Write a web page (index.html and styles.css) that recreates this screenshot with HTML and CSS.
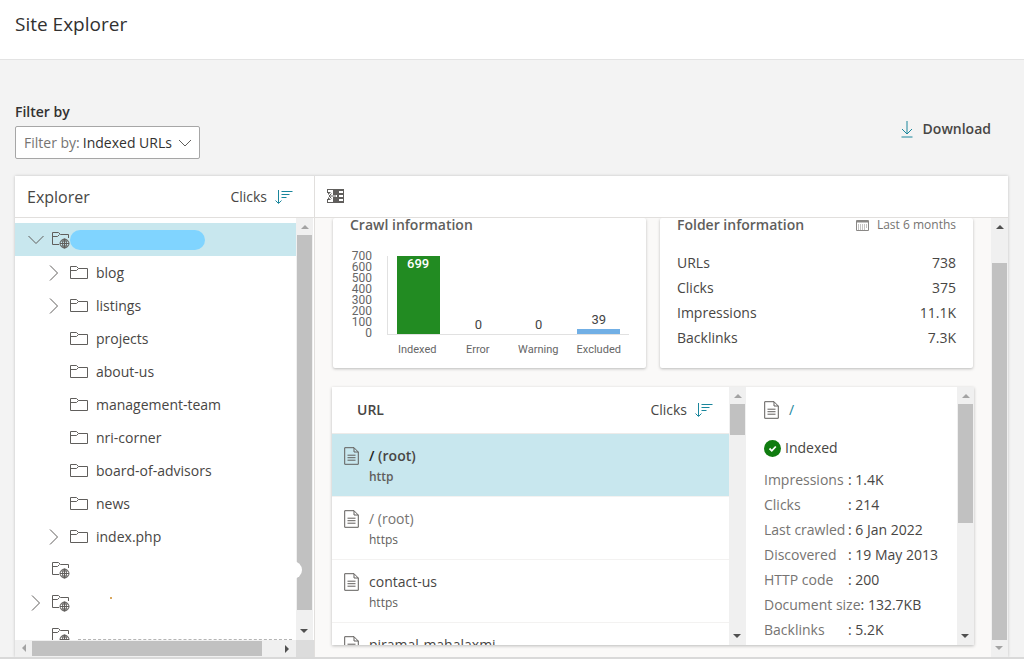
FILE: index.html
```html
<!DOCTYPE html>
<html lang="en">
  <head>
    <meta charset="UTF-8" />
    <meta name="viewport" content="width=device-width, initial-scale=1.0" />
    <title>Site Explorer</title>
    <link rel="stylesheet" href="styles.css" />
  </head>
  <body>
    <!-- Shared icons -->
    <svg class="sprite" aria-hidden="true">
      <symbol id="folder" viewBox="0 0 18 13">
        <path d="M.5 12.500V.5h6l2 2h9v10zM.5 4.500h6l2-2" />
      </symbol>
      <symbol id="site" viewBox="0 0 18 18">
        <path d="M7 13.500H.5V1.500h6l2 2h8V7M.5 5.500h5l2-2" />
        <g>
          <circle cx="12.500" cy="12.500" r="4.500" />
          <ellipse cx="12.500" cy="12.500" rx="2" ry="4.500" />
          <path d="M8 12.500h9M12.500 8v9M9 10h7M9 15h7" />
        </g>
      </symbol>
      <symbol id="chevron" viewBox="0 0 10 16">
        <path d="M1 .5L8.500 8 1 15.500" />
      </symbol>
      <symbol id="sort" viewBox="0 0 18 16">
        <path d="M3.500 1v13M.5 11.500l3 3 3-3M6.500 2.500h11M6.500 5.500h8M6.500 8.500h5" />
      </symbol>
      <symbol id="page" viewBox="0 0 15 18">
        <path d="M.7.7h9.300l4.300 4.300v12.300H.7zM10 .7v4.300h4.300M3.500 8.200h8M3.500 10.700h8M3.500 13.200h8" />
      </symbol>
    </svg>

    <header class="header">
      <h1>Site Explorer</h1>
    </header>

    <main class="main">
      <div class="toolbar">
        <div class="filter">
          <label class="filter__title" for="filter">Filter by</label>
          <div class="filter__box">
            <span>Filter by:</span>
            <select id="filter">
              <option>Indexed URLs</option>
              <option>All URLs</option>
            </select>
            <svg class="filter__arrow" viewBox="0 0 14 8"><path d="M1 1l6 6 6-6" /></svg>
          </div>
        </div>
        <button type="button" class="download">
          <svg viewBox="0 0 12 18"><path d="M6 1v13M1 9l5 5 5-5M.5 17h11" /></svg>
          Download
        </button>
      </div>

      <div class="panel">
        <section class="explorer">
          <div class="bar">
            <h2>Explorer</h2>
            <button type="button" class="sort">Clicks <svg><use href="#sort" /></svg></button>
          </div>
          <div class="explorer__body">
            <ul class="tree">
              <li class="tree__row tree__row--selected">
                <button type="button" class="toggle toggle--open" aria-label="Collapse site"><svg><use href="#chevron" /></svg></button>
                <svg class="site"><use href="#site" /></svg>
                <span class="redacted"></span>
              </li>
              <li class="tree__row tree__row--child">
                <button type="button" class="toggle" aria-label="Expand blog"><svg><use href="#chevron" /></svg></button>
                <svg class="folder"><use href="#folder" /></svg>
                <span>blog</span>
              </li>
              <li class="tree__row tree__row--child">
                <button type="button" class="toggle" aria-label="Expand listings"><svg><use href="#chevron" /></svg></button>
                <svg class="folder"><use href="#folder" /></svg>
                <span>listings</span>
              </li>
              <li class="tree__row tree__row--child">
                <i class="toggle"></i>
                <svg class="folder"><use href="#folder" /></svg>
                <span>projects</span>
              </li>
              <li class="tree__row tree__row--child">
                <i class="toggle"></i>
                <svg class="folder"><use href="#folder" /></svg>
                <span>about-us</span>
              </li>
              <li class="tree__row tree__row--child">
                <i class="toggle"></i>
                <svg class="folder"><use href="#folder" /></svg>
                <span>management-team</span>
              </li>
              <li class="tree__row tree__row--child">
                <i class="toggle"></i>
                <svg class="folder"><use href="#folder" /></svg>
                <span>nri-corner</span>
              </li>
              <li class="tree__row tree__row--child">
                <i class="toggle"></i>
                <svg class="folder"><use href="#folder" /></svg>
                <span>board-of-advisors</span>
              </li>
              <li class="tree__row tree__row--child">
                <i class="toggle"></i>
                <svg class="folder"><use href="#folder" /></svg>
                <span>news</span>
              </li>
              <li class="tree__row tree__row--child">
                <button type="button" class="toggle" aria-label="Expand index.php"><svg><use href="#chevron" /></svg></button>
                <svg class="folder"><use href="#folder" /></svg>
                <span>index.php</span>
              </li>
              <li class="tree__row">
                <i class="toggle"></i>
                <svg class="site"><use href="#site" /></svg>
              </li>
              <li class="tree__row">
                <button type="button" class="toggle" aria-label="Expand site"><svg><use href="#chevron" /></svg></button>
                <svg class="site"><use href="#site" /></svg>
                <span class="speck"></span>
              </li>
              <li class="tree__row">
                <i class="toggle"></i>
                <svg class="site"><use href="#site" /></svg>
                <span class="remnant"></span>
              </li>
            </ul>
            <div class="scroll scroll--tree"><i class="up off"></i><b></b><i class="down"></i></div>
            <div class="scroll scroll--across"><i class="left off"></i><b></b><i class="right"></i></div>
            <div class="corner"></div>
            <span class="knob"></span>
          </div>
        </section>

        <section class="content">
          <div class="bar">
            <button type="button" class="collapse" aria-label="Collapse explorer">
              <svg viewBox="0 0 17 14">
                <path fill="#605e5c" d="M0 0h17v14H0z" />
                <path fill="#fff" d="M1 1h5v2H1zM1 11h5v2H1zM12 2h4v2h-4zM12 6h4v2h-4zM12 10h4v2h-4zM0 4h1v6H0z" />
                <path fill="#fff" d="M0 7l4-4h2v3h4v2H6v3H4z" />
                <path fill="none" stroke="#605e5c" d="M4.500 4.500L2 7l2.500 2.500M2 7h7" />
              </svg>
            </button>
          </div>
          <div class="content__body">
            <div class="content__view">
              <div class="cards">
                <article class="card">
                  <h3>Crawl information</h3>
                  <div class="chart">
                    <ol class="chart__axis">
                      <li>700</li><li>600</li><li>500</li><li>400</li><li>300</li><li>200</li><li>100</li><li>0</li>
                    </ol>
                    <div class="chart__plot">
                      <div class="chart__col"><b class="chart__bar chart__bar--indexed" style="height: 100%">699</b></div>
                      <div class="chart__col"><span>0</span></div>
                      <div class="chart__col"><span>0</span></div>
                      <div class="chart__col"><span>39</span><b class="chart__bar" style="height: 6%"></b></div>
                    </div>
                    <div class="chart__names"><span>Indexed</span><span>Error</span><span>Warning</span><span>Excluded</span></div>
                  </div>
                </article>
                <article class="card">
                  <div class="card__head">
                    <h3>Folder information</h3>
                    <span class="period">
                      <svg viewBox="0 0 13 12">
                        <path d="M.5 1.500h12v10H.5z" />
                        <path d="M1 2.500h11" stroke-width="2" />
                        <path d="M2 6h9M2 8h9M2 10h7" stroke-dasharray="1 1" />
                      </svg>
                      Last 6 months
                    </span>
                  </div>
                  <dl class="stats">
                    <dt>URLs</dt><dd>738</dd>
                    <dt>Clicks</dt><dd>375</dd>
                    <dt>Impressions</dt><dd>11.1K</dd>
                    <dt>Backlinks</dt><dd>7.3K</dd>
                  </dl>
                </article>
              </div>

              <div class="urls">
                <div class="urls__list">
                  <div class="urls__head">
                    <h3>URL</h3>
                    <button type="button" class="sort">Clicks <svg><use href="#sort" /></svg></button>
                  </div>
                  <div class="url url--selected"><svg class="page"><use href="#page" /></svg><p><em>/</em> (root)<small>http</small></p></div>
                  <div class="url url--muted"><svg class="page"><use href="#page" /></svg><p><em>/</em> (root)<small>https</small></p></div>
                  <div class="url"><svg class="page"><use href="#page" /></svg><p>contact-us<small>https</small></p></div>
                  <div class="url"><svg class="page"><use href="#page" /></svg><p>piramal-mahalaxmi<small>https</small></p></div>
                </div>
                <div class="scroll scroll--urls"><i class="up off"></i><b></b><i class="down"></i></div>
                <div class="details">
                  <a class="details__link" href="#"><svg class="page"><use href="#page" /></svg>/</a>
                  <p class="details__state">
                    <svg viewBox="0 0 17 17"><circle cx="8.500" cy="8.500" r="8.500" fill="#107c10" /><path d="M5.500 8.500l2.300 2.300 4-4.300" fill="none" stroke="#fff" stroke-width="1.800" /></svg>
                    Indexed
                  </p>
                  <dl class="facts">
                    <div><dt>Impressions</dt><dd>1.4K</dd></div>
                    <div><dt>Clicks</dt><dd>214</dd></div>
                    <div><dt>Last crawled</dt><dd>6 Jan 2022</dd></div>
                    <div><dt>Discovered</dt><dd>19 May 2013</dd></div>
                    <div><dt>HTTP code</dt><dd>200</dd></div>
                    <div><dt>Document size</dt><dd>132.7KB</dd></div>
                    <div><dt>Backlinks</dt><dd>5.2K</dd></div>
                  </dl>
                </div>
                <div class="scroll scroll--details"><i class="up off"></i><b></b><i class="down"></i></div>
              </div>
            </div>
            <div class="scroll scroll--main"><i class="up"></i><b></b><i class="down off"></i></div>
          </div>
        </section>
      </div>
    </main>
  </body>
</html>
```
FILE: styles.css
```css
* {
  box-sizing: border-box;
  margin: 0;
  padding: 0;
}

body {
  display: flex;
  flex-direction: column;
  height: 100vh;
  overflow: hidden;
  background-color: #f3f3f3;
  border-bottom: 2px solid #d9d9d9;
  color: #484644;
  font: 14px/20px "Open Sans", "Noto Sans", sans-serif;
}

button,
select {
  border: none;
  background: none;
  color: inherit;
  font: inherit;
  cursor: pointer;
}

svg {
  flex: none;
  fill: none;
  stroke: #605e5c;
}

ul,
ol {
  list-style: none;
}

.sprite {
  position: absolute;
  width: 0;
  height: 0;
}

/* Header */
.header {
  flex: none;
  padding: 10px 15px 21px;
  background-color: #fff;
  border-bottom: 1px solid #e3e3e3;
}

.header h1 {
  color: #323130;
  font-size: 19px;
  font-weight: 400;
  line-height: 28px;
}

.main {
  flex: 1;
  display: flex;
  flex-direction: column;
  min-height: 0;
  padding: 42px 15px 0;
}

/* Filter and download */
.toolbar {
  display: flex;
  justify-content: space-between;
  align-items: center;
  padding-right: 18px;
}

.filter__title {
  display: block;
  margin-bottom: 4px;
  color: #323130;
  font-weight: 600;
}

.filter__box {
  position: relative;
  display: flex;
  align-items: center;
  gap: 3px;
  height: 33px;
  padding: 0 8px;
  background-color: #fff;
  border: 1px solid #a6a6a6;
  border-radius: 2px;
  color: #767472;
}

.filter__box select {
  padding-right: 18px;
  appearance: none;
  color: #323130;
}

.filter__arrow {
  position: absolute;
  right: 7px;
  width: 14px;
  height: 8px;
  pointer-events: none;
}

.download {
  display: flex;
  align-items: center;
  gap: 10px;
  padding-bottom: 3px;
  font-weight: 600;
}

.download svg {
  width: 12px;
  height: 18px;
  stroke: #1a869c;
}

/* Panel */
.panel {
  flex: 1;
  display: flex;
  min-height: 0;
  margin: 17px 1px 0 0;
  background-color: #fff;
  box-shadow: 0 0 3px rgba(0, 0, 0, 0.2);
}

.bar {
  flex: none;
  display: flex;
  align-items: center;
  justify-content: space-between;
  height: 42px;
  padding: 0 21px 0 12px;
  border-bottom: 1px solid #e1dfdd;
}

.bar h2 {
  font-size: 16px;
  font-weight: 400;
}

.sort {
  display: flex;
  align-items: center;
  gap: 8px;
}

.sort svg {
  width: 18px;
  height: 16px;
  stroke: #1a869c;
}

.collapse svg {
  display: block;
  width: 17px;
  height: 14px;
  margin-bottom: 2px;
  stroke: none;
}

/* Explorer */
.explorer {
  flex: none;
  display: flex;
  flex-direction: column;
  width: 300px;
  border-right: 1px solid #e1dfdd;
}

.explorer__body {
  position: relative;
  flex: 1;
  display: grid;
  grid-template-columns: 1fr 18px;
  grid-template-rows: minmax(0, 1fr) 17px;
  min-height: 0;
}

.tree {
  overflow: hidden;
  padding-top: 5px;
}

.tree__row {
  display: flex;
  align-items: center;
  height: 33px;
  padding-left: 12px;
}

.tree__row--child {
  padding-left: 30px;
}

.tree__row--selected {
  background-color: #c8e7ee;
}

.toggle {
  flex: none;
  display: grid;
  place-content: center;
  width: 18px;
  margin-right: 7px;
}

.toggle svg {
  width: 10px;
  height: 16px;
}

.toggle--open svg {
  transform: rotate(90deg);
}

.folder {
  width: 18px;
  height: 13px;
  margin-right: 8px;
}

.site {
  width: 18px;
  height: 18px;
}

.redacted {
  width: 135px;
  height: 20px;
  border-radius: 10px;
  background-color: #80d4ff;
}

.speck {
  width: 2px;
  height: 2px;
  margin: 0 0 10px 40px;
  background-color: #d9a860;
}

.remnant {
  flex: 1;
  margin: 8px 4px 0 8px;
  border-top: 1px dashed #b5b5b5;
}

.corner {
  background-color: #dcdcdc;
}

.knob {
  position: absolute;
  right: 12px;
  bottom: 78px;
  width: 18px;
  height: 18px;
  border-radius: 50%;
  background-color: #fff;
}

/* Drawn scroll bars */
.scroll {
  flex: none;
  display: flex;
  flex-direction: column;
  align-items: center;
  justify-content: space-between;
  width: 17px;
  background-color: #f0f0f0;
}

.scroll b {
  width: 15px;
  background-color: #c1c1c1;
}

.scroll i {
  flex: none;
  height: 17px;
  width: 17px;
  display: grid;
  place-content: center;
}

.scroll i::before {
  content: "";
  border: 4px solid transparent;
  border-top: none;
  border-bottom: 4px solid #505050;
}

.scroll .off::before {
  border-bottom-color: #a3a3a3;
}

.scroll .down {
  transform: rotate(180deg);
}

.scroll .left {
  transform: rotate(-90deg);
}

.scroll .right {
  transform: rotate(90deg);
}

.scroll--tree b {
  flex: 1;
  margin-bottom: 13px;
}

.scroll--across {
  flex-direction: row;
  width: auto;
}

.scroll--across b {
  flex: 1;
  height: 15px;
  margin-right: 17px;
}

.scroll--main b {
  flex: 1;
  margin-top: 28px;
}

.scroll--urls b {
  height: 12%;
  margin-bottom: auto;
}

.scroll--details b {
  height: 46%;
  margin-bottom: auto;
}

/* Content */
.content {
  flex: 1;
  display: flex;
  flex-direction: column;
  min-width: 0;
}

.content__body {
  flex: 1;
  display: flex;
  min-height: 0;
  background-color: #faf9f8;
}

.content__view {
  flex: 1;
  display: flex;
  flex-direction: column;
  gap: 19px;
  min-width: 0;
  overflow: hidden;
  padding: 0 18px 12px;
}

.cards {
  flex: none;
  display: grid;
  grid-template-columns: 1fr 1fr;
  gap: 14px;
  height: 150px;
}

.card {
  padding: 0 17px;
  background-color: #fff;
  border-radius: 2px;
  box-shadow: 0 1px 3px rgba(0, 0, 0, 0.25);
}

.card h3 {
  color: #605e5c;
  font-size: 14px;
  font-weight: 600;
  line-height: 13px;
}

.card__head {
  display: flex;
  justify-content: space-between;
}

.period {
  display: flex;
  align-items: center;
  gap: 8px;
  color: #767472;
  font-size: 12px;
  line-height: 13px;
}

.period svg {
  width: 13px;
  height: 12px;
  stroke: #8a8886;
}

.stats {
  display: grid;
  grid-template-columns: 1fr auto;
  margin-top: 19px;
  line-height: 25px;
}

.stats dd {
  text-align: right;
}

/* Chart */
.chart {
  display: grid;
  grid-template-columns: 22px 1fr;
  column-gap: 15px;
  margin-top: 19px;
  font-family: Roboto, "Liberation Sans", sans-serif;
}

.chart__axis {
  padding-top: 1px;
  color: #666;
  font-size: 12px;
  line-height: 11px;
  text-align: right;
}

.chart__plot,
.chart__names {
  display: grid;
  grid-template-columns: repeat(4, 1fr);
}

.chart__plot {
  height: 79px;
  margin-top: 6px;
  border-left: 1px solid #e1e1e1;
  border-bottom: 1px solid #e1e1e1;
}

.chart__col {
  display: flex;
  flex-direction: column;
  align-items: center;
  justify-content: flex-end;
  min-height: 0;
  color: #444;
  font-size: 13px;
  line-height: 18px;
}

.chart__bar {
  width: 43px;
  background-color: #71afe5;
  color: #fff;
  font-weight: 500;
  text-align: center;
  line-height: 16px;
}

.chart__bar--indexed {
  background-color: #228b22;
}

.chart__names {
  grid-column: 2;
  padding-top: 5px;
  color: #666;
  font-size: 11px;
  text-align: center;
}

/* The plot is shorter than the axis labels beside it */
.chart__names span {
  line-height: 12px;
}

/* URL list */
.urls {
  flex: 1;
  display: flex;
  min-height: 0;
  margin: 0 -1px;
  background-color: #fff;
  box-shadow: 0 1px 3px rgba(0, 0, 0, 0.25);
}

.urls__list {
  flex: 1;
  overflow: hidden;
}

.urls__head {
  display: flex;
  align-items: center;
  justify-content: space-between;
  height: 47px;
  padding: 0 16px 0 25px;
  border-bottom: 1px solid #edebe9;
}

.urls__head h3 {
  font-size: 14px;
  font-weight: 600;
}

.url {
  display: flex;
  gap: 10px;
  height: 63px;
  padding: 12px 12px;
  border-bottom: 1px solid #f3f2f1;
}

.url em {
  font-style: normal;
}

.url small {
  display: block;
  color: #605e5c;
  font-size: 12px;
  line-height: 22px;
}

.url--selected {
  background-color: #c8e7ee;
  font-weight: 600;
}

.url--selected em {
  color: #201f1e;
}

.url--muted {
  color: #767472;
}

.page {
  width: 15px;
  height: 18px;
  margin-top: 1px;
}

/* Details */
.details {
  flex: none;
  width: 211px;
  padding: 13px 0 0 18px;
  overflow: hidden;
}

.details__link {
  display: flex;
  gap: 10px;
  color: #1a869c;
  text-decoration: none;
}

.details__state {
  display: flex;
  align-items: center;
  gap: 4px;
  margin: 18px 0 9px;
}

.details__state svg {
  width: 17px;
  height: 17px;
  stroke: none;
}

.facts div {
  display: flex;
  line-height: 25px;
}

.facts dt {
  min-width: 84px;
  color: #767472;
}

.facts dd::before {
  content: ": ";
}
```
